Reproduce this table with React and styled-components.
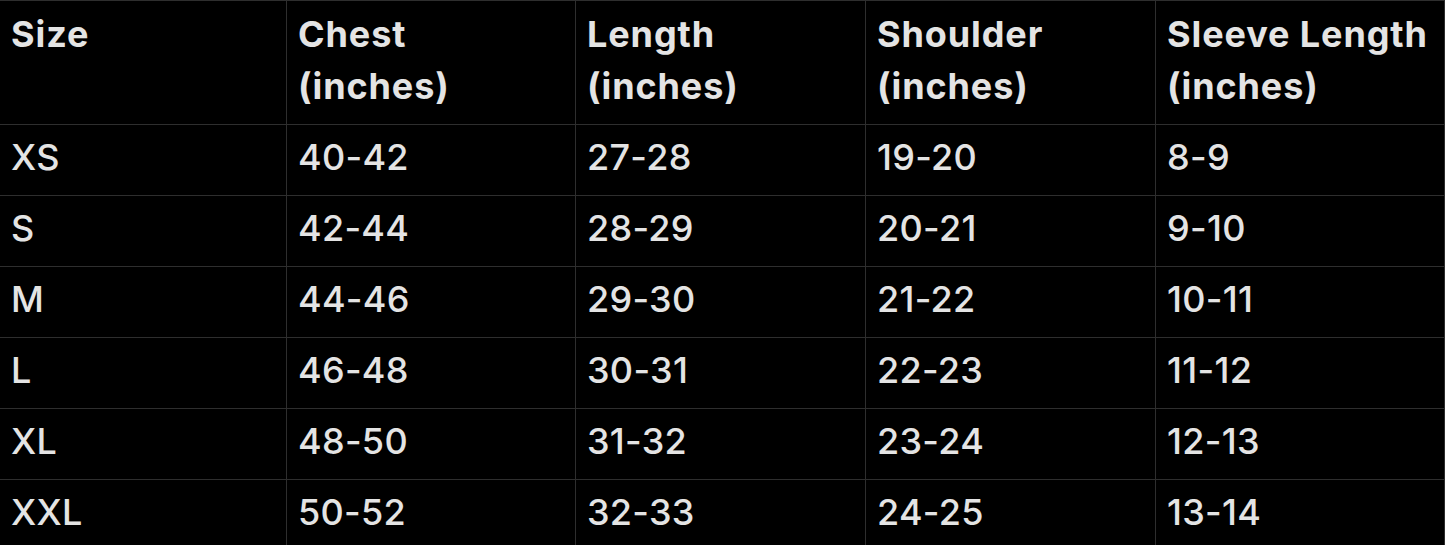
import React from "react";
import styled, { createGlobalStyle } from "styled-components";

const Global = createGlobalStyle`
  html, body { margin: 0; padding: 0; background: #000; }
  body { font-family: Inter, "Noto Sans", sans-serif; overflow: hidden; }
`;

const Table = styled.div`
  display: grid;
  grid-template-columns: 287px 289px 290px 290px 288px;
  grid-auto-rows: 71px;
  grid-template-rows: 124px;
  width: 1444px;
  border-top: 1px solid #2e2e2e;
  border-right: 1px solid #2e2e2e;
  background: #000;
`;

const Cell = styled.div`
  box-sizing: border-box;
  border-bottom: 1px solid #2e2e2e;
  border-right: ${(p) => (p.$last ? "none" : "1px solid #2e2e2e")};
  padding: ${(p) => (p.$head ? "7px 12px 0 11px" : "6px 12px 0 11px")};
  color: #e4e4e4;
  font-size: 36px;
  line-height: 52px;
  font-weight: ${(p) => (p.$head ? 700 : 500)};
  letter-spacing: ${(p) => (p.$head ? "0.9px" : "0.3px")};
  white-space: nowrap;
`;

const headers = [
  ["Size"],
  ["Chest", "(inches)"],
  ["Length", "(inches)"],
  ["Shoulder", "(inches)"],
  ["Sleeve Length", "(inches)"],
];

const rows = [
  ["XS", "40-42", "27-28", "19-20", "8-9"],
  ["S", "42-44", "28-29", "20-21", "9-10"],
  ["M", "44-46", "29-30", "21-22", "10-11"],
  ["L", "46-48", "30-31", "22-23", "11-12"],
  ["XL", "48-50", "31-32", "23-24", "12-13"],
  ["XXL", "50-52", "32-33", "24-25", "13-14"],
];

export default function App() {
  return (
    <>
      <Global />
      <Table>
        {headers.map((h, i) => (
          <Cell key={"h" + i} $head $last={i === 4}>
            {h.map((line, j) => (
              <div key={j}>{line}</div>
            ))}
          </Cell>
        ))}
        {rows.map((r, ri) =>
          r.map((c, ci) => (
            <Cell key={ri + "-" + ci} $last={ci === 4}>
              {c}
            </Cell>
          ))
        )}
      </Table>
    </>
  );
}
